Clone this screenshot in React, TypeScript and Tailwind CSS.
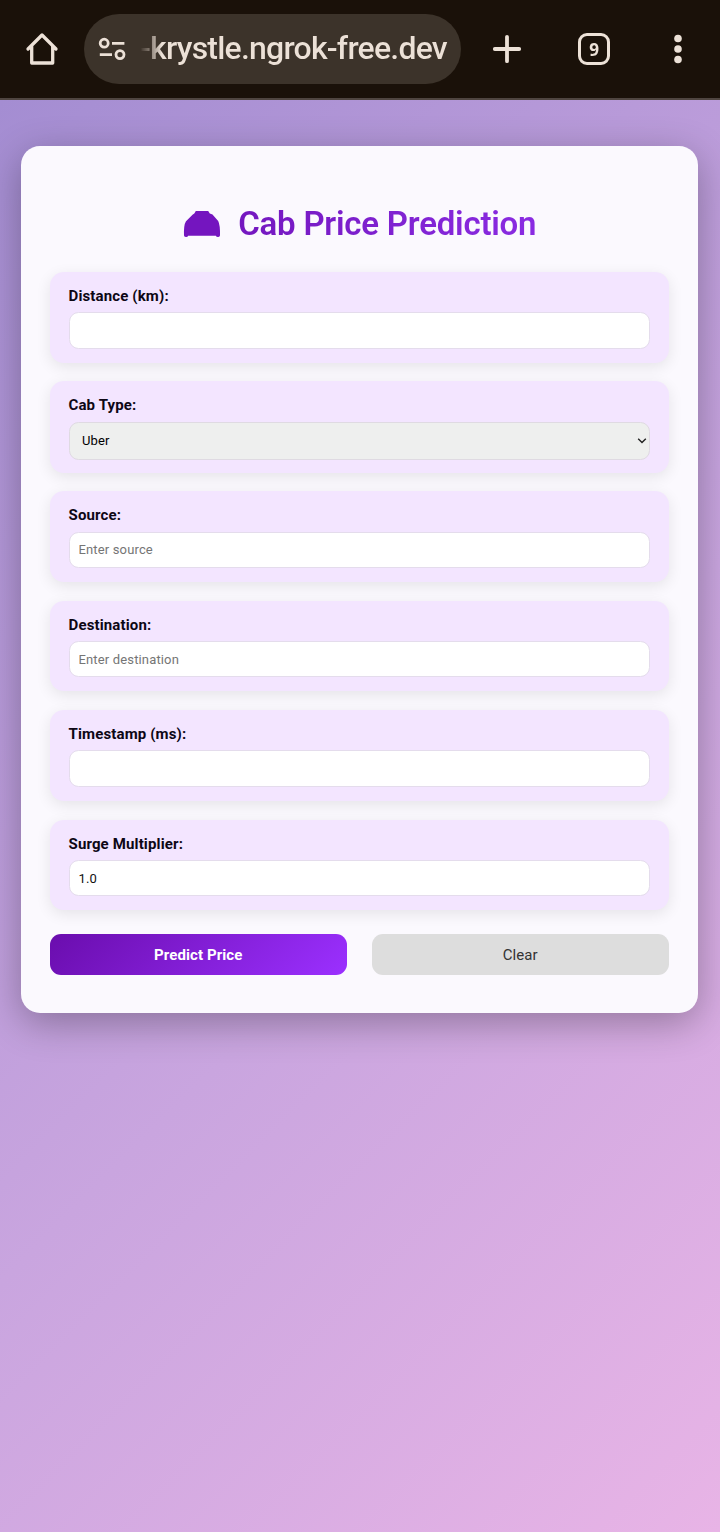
import React from "react";

type FieldProps = { label: string; children: React.ReactNode; height: string };

const inputClass =
  "block h-[36.5px] w-full rounded-[9.5px] border border-[#e4dcec] bg-white px-[9px] text-[13px] tracking-[0.15px] text-[#111] outline-none placeholder:text-[#757575]";

function Field({ label, children, height }: FieldProps) {
  return (
    <div
      className={`${height} rounded-[14px] bg-[#f3e5ff] px-[19px] pt-[14px] shadow-[0_4px_15px_rgba(0,0,0,0.09)]`}
    >
      <label className="mb-[6.3px] block h-5 text-[15px] leading-5 font-bold tracking-[0.14px] text-[#0d0715]">
        {label}
      </label>
      {children}
    </div>
  );
}

function BrowserBar() {
  return (
    <header className="flex h-[100px] shrink-0 items-start border-b-2 border-[#4f4540] bg-[#1a1109] text-[#ece1d7]">
      <svg className="ml-[24px] mt-[31px] size-9" viewBox="0 0 36 36" fill="none" stroke="currentColor" strokeWidth="3.3" strokeLinecap="round" strokeLinejoin="round">
        <path d="M4 18 L18 4 L32 18 M7.7 15.5 V32 H28.7 V15.5" />
      </svg>
      <div className="mt-[14px] ml-6 flex h-[70px] w-[377px] items-center rounded-full bg-[#3c332a]">
        <svg className="ml-[14px] h-[24px] w-7 shrink-0" viewBox="0 0 28 24" fill="none" stroke="currentColor" strokeWidth="2.8">
          <circle cx="6.2" cy="6.2" r="4" />
          <path d="M14 6.3 H26.4 M1.8 17.6 H14" />
          <circle cx="22" cy="17.6" r="4" />
        </svg>
        <div className="mb-[2px] ml-[14px] w-[310px] bg-linear-to-r from-[#3c332a] to-[#ece1d7] to-[7%] bg-clip-text text-[32px] leading-[40px] font-medium tracking-[-0.79px] whitespace-nowrap text-transparent">
          -krystle.ngrok-free.dev
        </div>
      </div>
      <svg className="mt-[34px] ml-[31px] size-[30px]" viewBox="0 0 30 30" fill="none" stroke="currentColor" strokeWidth="3.8" strokeLinecap="round">
        <path d="M15 2.8 V27.2 M2.8 15 H27.2" />
      </svg>
      <div className="mt-[33px] ml-[56px] flex size-8 items-center justify-center rounded-[9px] border-[3.5px] border-[#ece1d7] font-['Noto_Sans',sans-serif] text-[18px] leading-none font-bold">
        <span className="scale-x-95">9</span>
      </div>
      <svg className="mt-[34px] ml-[63px] h-[30px] w-[10px]" viewBox="0 0 10 30" fill="currentColor">
        <circle cx="5" cy="4.5" r="3.8" />
        <circle cx="5" cy="15" r="3.8" />
        <circle cx="5" cy="25.5" r="3.8" />
      </svg>
    </header>
  );
}

export default function App() {
  return (
    <div className="flex h-[1532px] w-[720px] flex-col overflow-hidden font-[Roboto,sans-serif]">
      <BrowserBar />
      <main className="flex-1 bg-[linear-gradient(135deg,#a48dd2_0%,#c9a5df_55%,#e8b4e6_100%)] pt-[46px] pl-[20.5px]">
        <section className="h-[867px] w-[677.5px] rounded-[19px] bg-[#fbf9fe] px-[29px] pt-[56px] shadow-[0_10px_38px_rgba(0,0,0,0.3)]">
          <h1 className="flex h-[43px] items-center justify-center">
            <svg className="mt-[1px] mr-[17.5px] ml-[0.5px] h-[28px] w-[38px]" viewBox="0 0 38 28">
              <path
                d="M12.8 1 H25.2 L26.8 3.4 L29.5 4.5 L35.2 11 Q37.2 15 37 25.5 Q36.5 27 35 27 Q33 27 33 25.7 H5 Q5 27 3.2 27 Q1.3 27 1 25.5 Q.6 15 3 11.3 L9.5 4.7 L11.3 3.4 Z"
                fill="#7415bf"
              />
            </svg>
            <span className="bg-linear-to-r from-[#7417bf] to-[#8a2be2] bg-clip-text text-[33px] leading-[43px] font-semibold tracking-[-0.22px] whitespace-nowrap text-transparent">
              Cab Price Prediction
            </span>
          </h1>
          <form className="mt-[27px] flex flex-col gap-[18.6px]" onSubmit={(e) => e.preventDefault()}>
            <Field label="Distance (km):" height="h-[90.7px]">
              <input aria-label="Distance" className={inputClass} />
            </Field>
            <Field label="Cab Type:" height="h-[91.4px]">
              <div className="relative">
                <select aria-label="Cab Type" className="block h-[38px] w-full appearance-none rounded-[9.5px] border border-[#dfdae2] bg-[#eeefee] pl-[12.5px] text-[13px] tracking-[0.15px] text-black">
                  <option>Uber</option>
                  <option>Lyft</option>
                </select>
                <svg className="pointer-events-none absolute top-[16.5px] right-[3.5px] h-[6px] w-[10px]" viewBox="0 0 10 6" fill="none" stroke="#222" strokeWidth="1.4">
                  <path d="M1.2 .8 L5 4.6 L8.8 .8" />
                </svg>
              </div>
            </Field>
            <Field label="Source:" height="h-[90.7px]">
              <input className={inputClass} placeholder="Enter source" />
            </Field>
            <Field label="Destination:" height="h-[90.7px]">
              <input className={inputClass} placeholder="Enter destination" />
            </Field>
            <Field label="Timestamp (ms):" height="h-[91.1px]">
              <input aria-label="Timestamp" className={inputClass} />
            </Field>
            <Field label="Surge Multiplier:" height="h-[90.7px]">
              <input aria-label="Surge Multiplier" className={inputClass} defaultValue="1.0" />
            </Field>
            <div className="mt-[5.2px] grid grid-cols-2 gap-[24.5px]">
              <button className="h-[41px] rounded-[11px] bg-[linear-gradient(135deg,#6a0dad,#9b30ff)] pt-px text-[15px] font-bold tracking-[0.1px] text-white">
                Predict Price
              </button>
              <button className="h-[41px] rounded-[11px] bg-[#dddddd] pt-px text-[15px] tracking-[0.1px] text-[#333]">
                Clear
              </button>
            </div>
          </form>
        </section>
      </main>
    </div>
  );
}
